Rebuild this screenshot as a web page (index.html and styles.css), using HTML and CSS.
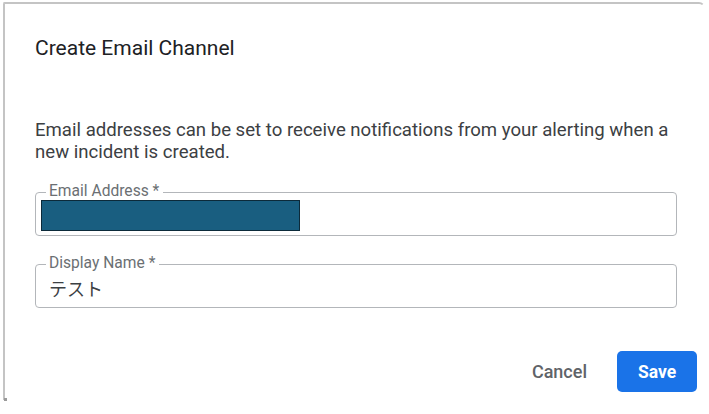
FILE: index.html
```html
<!DOCTYPE html>
<html>
<head>
<meta charset="utf-8">
<link rel="stylesheet" href="styles.css">
</head>
<body>
<div class="dialog">
  <h1 class="title">Create Email Channel</h1>
  <p class="desc">Email addresses can be set to receive notifications from your alerting when a new incident is created.</p>
  <div class="field field-email">
    <span class="label">Email Address *</span>
    <div class="redact"></div>
  </div>
  <div class="field field-name">
    <span class="label">Display Name *</span>
    <div class="value">テスト</div>
  </div>
  <div class="actions">
    <button class="btn btn-cancel">Cancel</button>
    <button class="btn btn-save">Save</button>
  </div>
</div>
<div class="corner"></div>
</body>
</html>
```
FILE: styles.css
```css
html, body {
  margin: 0;
  padding: 0;
  background: #ffffff;
}
body {
  width: 709px;
  height: 414px;
  position: relative;
  overflow: hidden;
  font-family: Roboto, "Noto Sans CJK JP", sans-serif;
}
.dialog {
  margin: 2px 0 0 3px;
  width: 702px;
  height: 398px;
  box-sizing: border-box;
  border-top: 2px solid #c4c4c4;
  border-left: 2px solid #c4c4c4;
  border-right: 2px solid transparent;
  border-top-right-radius: 6px;
  border-top-left-radius: 2px;
  padding: 0 6px 0 30px;
  display: flex;
  flex-direction: column;
}
.title {
  margin: 32px 0 0 0;
  font-size: 21px;
  font-weight: 400;
  color: #202124;
  line-height: 24px;
}
.desc {
  margin: 59px 0 0 0;
  font-size: 18.6px;
  line-height: 22px;
  color: #3c4043;
  width: 650px;
}
.field {
  position: relative;
  height: 44px;
  box-sizing: border-box;
  border: 1.5px solid #b3b6ba;
  border-radius: 4px;
  width: 642px;
  display: flex;
  align-items: center;
}
.field-email {
  margin-top: 29px;
  padding-left: 5px;
}
.field-name {
  margin-top: 28px;
  padding-left: 13px;
}
.label {
  position: absolute;
  left: 10px;
  top: -11px;
  padding: 0 4px 0 3px;
  background: #ffffff;
  font-size: 15.6px;
  line-height: 18px;
  color: #6b6f73;
}
.redact {
  width: 257px;
  height: 29px;
  margin-top: 3px;
  background: #195e80;
  border: 1px solid #0c2a3a;
}
.value {
  font-family: "Noto Sans CJK JP", sans-serif;
  font-size: 18px;
  color: #3c4043;
  margin-top: 4px;
}
.actions {
  margin-top: 43px;
  display: flex;
  justify-content: flex-end;
  align-items: center;
  gap: 30px;
}
.btn {
  font-family: Roboto, sans-serif;
  border: none;
  cursor: pointer;
}
.btn-cancel {
  background: transparent;
  color: #5f6368;
  font-weight: 500;
  font-size: 18px;
  padding: 0;
}
.btn-save {
  background: #1a73e8;
  color: #ffffff;
  font-weight: 700;
  font-size: 17.5px;
  width: 80px;
  height: 41px;
  border-radius: 5px;
}
.corner {
  position: absolute;
  left: 4px;
  top: 398px;
  width: 3px;
  height: 3px;
  background: #9a9a9a;
}
```
